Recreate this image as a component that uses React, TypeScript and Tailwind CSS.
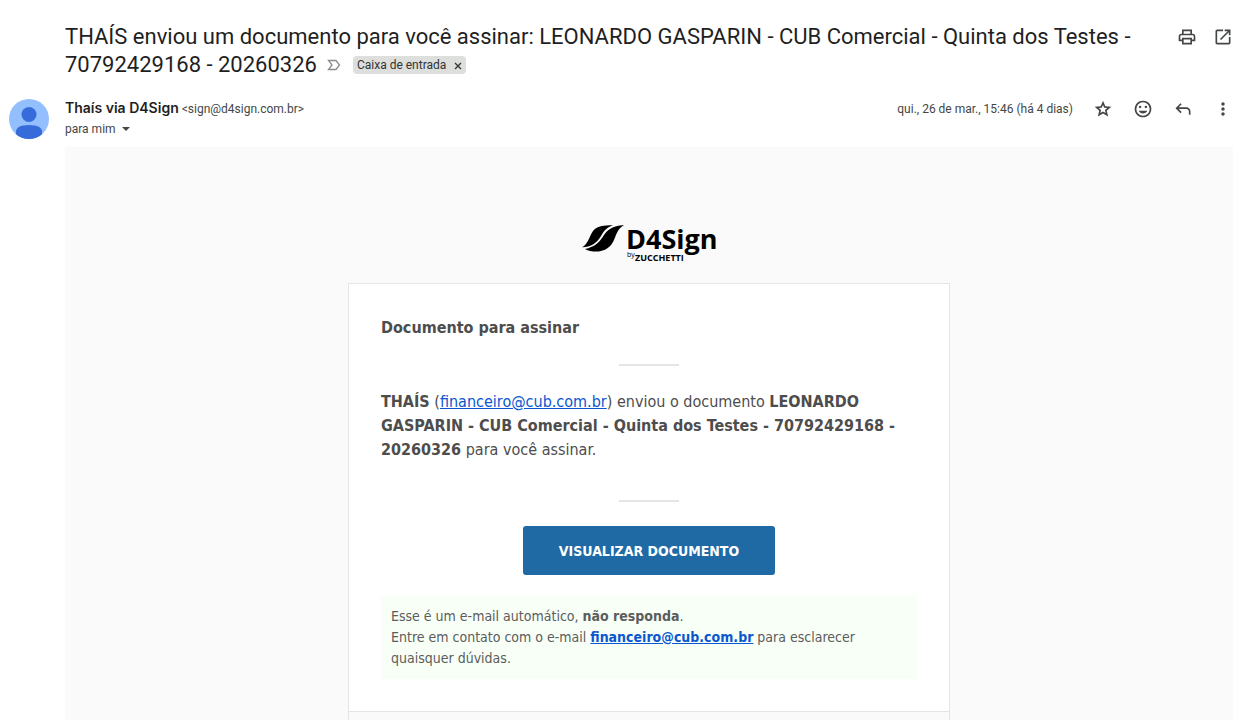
import React from 'react';

const bodyFont = "font-['DejaVu_Sans_Condensed','DejaVu_Sans',sans-serif]";

function Symbol({ d, className = 'size-5' }: { d: string; className?: string }) {
  return (
    <svg viewBox="0 -960 960 960" className={`${className} shrink-0`} fill="currentColor" aria-hidden="true">
      <path d={d} />
    </svg>
  );
}

const icons = {
  print: 'M640-640v-120H320v120h-80v-200h480v200h-80Zm80 360v160H240v-160H80v-240q0-51 35-85.5t85-34.5h560q51 0 85.5 34.5T880-520v240H720Zm-80-80H320v160h320v-160Zm80 0h80v-160q0-17-11.5-28.5T760-560H200q-17 0-28.5 11.5T160-520v160h80v-80h480v80Z',
  open: 'M200-120q-33 0-56.5-23.5T120-200v-560q0-33 23.5-56.5T200-840h280v80H200v560h560v-280h80v280q0 33-23.5 56.5T760-120H200Zm188-212-56-56 372-372H560v-80h280v280h-80v-144L388-332Z',
  star: 'm354-287 126-76 126 77-33-144 111-96-146-13-58-136-58 135-146 13 111 97-33 143ZM233-120l65-281L80-590l288-25 112-265 112 265 288 25-218 189 65 281-247-149-247 149Z',
  mood: 'M480-480Zm0 400q-83 0-156-31.5T197-197q-54-54-85.5-127T80-480q0-83 31.5-156T197-763q54-54 127-85.5T480-880q83 0 156 31.5T763-763q54 54 85.5 127T880-480q0 83-31.5 156T763-197q-54 54-127 85.5T480-80Zm0-80q134 0 227-93t93-227q0-134-93-227t-227-93q-134 0-227 93t-93 227q0 134 93 227t227 93Zm140-360q25 0 42.5-17.5T680-580q0-25-17.5-42.5T620-640q-25 0-42.5 17.5T560-580q0 25 17.5 42.5T620-520Zm-280 0q25 0 42.5-17.5T400-580q0-25-17.5-42.5T340-640q-25 0-42.5 17.5T280-580q0 25 17.5 42.5T340-520Zm140 260q68 0 123.5-38.5T684-400H276q25 63 80.5 101.5T480-260Z',
  reply: 'M760-200v-160q0-50-35-85t-85-35H273l144 144-57 56-240-240 240-240 57 56-144 144h367q83 0 141.5 58.5T840-360v160h-80Z',
  more: 'M480-160q-33 0-56.5-23.5T400-240q0-33 23.5-56.5T480-320q33 0 56.5 23.5T560-240q0 33-23.5 56.5T480-160Zm0-240q-33 0-56.5-23.5T400-480q0-33 23.5-56.5T480-560q33 0 56.5 23.5T560-480q0 33-23.5 56.5T480-400Zm0-240q-33 0-56.5-23.5T400-720q0-33 23.5-56.5T480-800q33 0 56.5 23.5T560-720q0 33-23.5 56.5T480-640Z',
};

function IconButton({ d, label }: { d: string; label: string }) {
  return (
    <button type="button" aria-label={label} className="text-[#444746]">
      <Symbol d={d} />
    </button>
  );
}

function Subject() {
  return (
    <div className="flex items-start pr-[7px] pl-[65px]">
      <h1 className="flex-1 font-[Roboto,sans-serif] text-[22px] leading-7 text-[#1f1f1f]">
        THAÍS enviou um documento para você assinar: LEONARDO GASPARIN - CUB Comercial - Quinta dos Testes - 70792429168 - 20260326
        <span className="ml-2.5 inline-flex h-7 items-center gap-3 align-bottom text-xs">
          <button type="button" aria-label="Importante">
            <svg viewBox="0 0 14 12" className="h-3 w-3.5" fill="none" stroke="#8a8d8c" aria-hidden="true">
              <path d="M1.500 1.500H9L12.500 6 9 10.500H1.500L5 6Z" strokeWidth="1.300" />
            </svg>
          </button>
          <span className="flex items-center gap-2 rounded bg-[#dddfdd] px-1 leading-[18px] text-[#333]">
            Caixa de entrada
            <button type="button" aria-label="Remover marcador">
              <svg viewBox="0 0 8 8" className="mt-px size-2" stroke="#333" strokeWidth="1.300" aria-hidden="true">
                <path d="m1 1 6 6M7 1 1 7" />
              </svg>
            </button>
          </span>
        </span>
      </h1>
      <div className="ml-6 flex gap-4 pt-1">
        <IconButton d={icons.print} label="Imprimir" />
        <IconButton d={icons.open} label="Abrir em nova janela" />
      </div>
    </div>
  );
}

function Sender() {
  return (
    <div className="flex pt-[19px] pr-[7px] pb-2 pl-[9px] font-[Roboto,sans-serif] text-xs text-[#444746]">
      <svg viewBox="0 0 40 40" className="mr-4 mt-px size-10 shrink-0" aria-hidden="true">
        <clipPath id="avatar"><circle cx="20" cy="20" r="20" /></clipPath>
        <g clipPath="url(#avatar)">
          <path d="M0 0h40v40H0z" fill="#94bfff" />
          <circle cx="20" cy="15.500" r="7.500" fill="#356cd9" />
          <path d="M7 40v-7q0-7 13-7t13 7v7Z" fill="#356cd9" />
        </g>
      </svg>
      <div className="flex-1">
        <p className="leading-5">
          <span className="font-[Inter,sans-serif] text-sm leading-5 font-semibold text-[#1f1f1f]">Thaís via D4Sign</span> &lt;sign@d4sign.com.br&gt;
        </p>
        <button type="button" className="flex items-center gap-1.5 leading-5">
          para mim
          <svg viewBox="0 0 8 4" className="h-1 w-2" fill="currentColor" aria-hidden="true"><path d="M0 0h8L4 4Z" /></svg>
        </button>
      </div>
      <div className="flex h-[22px] items-center gap-5">
        <time dateTime="2026-03-26T15:46">qui., 26 de mar., 15:46 (há 4 dias)</time>
        <IconButton d={icons.star} label="Marcar com estrela" />
        <IconButton d={icons.mood} label="Reagir" />
        <IconButton d={icons.reply} label="Responder" />
        <IconButton d={icons.more} label="Mais" />
      </div>
    </div>
  );
}

function Logo() {
  return (
    <svg viewBox="0 0 136 40" className="h-10 w-[136px] overflow-visible" role="img" aria-label="D4Sign by Zucchetti">
      <path d="M1 24.300C7 21 8 14 12 8C16 3 22 2.300 32 2.300C25 5 23 8 20 13C16 20 10 24 1 24.300Z" />
      <path d="M4 26C13 24 18 20 22 13.500C26 7 31 3 43 2C36 6 35 13 32 19C28 26 22 28.500 15 28.500C11 28.500 7 28 4 26Z" />
      <g fontFamily="Open Sans, sans-serif">
        <text x="45" y="26" fontSize="27" fontWeight="700">D4Sign</text>
        <text x="46" y="34" fontSize="7">by</text>
        <text x="54" y="38" fontSize="9" fontWeight="700">ZUCCHETTI</text>
      </g>
    </svg>
  );
}

function Divider() {
  return <hr className="mx-auto w-[60px] border-t-2 border-[#e5e5e5]" />;
}

export default function App() {
  return (
    <main className="flex min-h-screen flex-col bg-white pt-[23px]">
      <Subject />
      <Sender />
      <section className={`mr-[7px] ml-[65px] flex flex-1 flex-col bg-[#fafafa] pt-[76px] text-[#4d4d4d] ${bodyFont}`}>
        <div className="flex justify-center pb-5"><Logo /></div>
        <article className="mx-auto w-full max-w-[602px] border border-[#e5e5e5] bg-white p-8 text-base leading-6">
          <h2 className="mb-6 font-bold">Documento para assinar</h2>
          <Divider />
          <p className="my-6 pb-[14px]">
            <b>THAÍS</b> (<a href="mailto:financeiro@cub.com.br" className="text-[#0b57d0] underline">financeiro@cub.com.br</a>) enviou o documento <b>LEONARDO GASPARIN - CUB Comercial - Quinta dos Testes - 70792429168 - 20260326</b> para você assinar.
          </p>
          <Divider />
          <div className="mt-6 mb-[21px] flex justify-center">
            <button type="button" className="h-[49px] rounded-[3px] bg-[#1f69a5] px-9 text-sm font-bold text-white">VISUALIZAR DOCUMENTO</button>
          </div>
          <p className="bg-[#f7fff7] p-2.5 text-sm leading-[21px] text-[#5c5c5c]">
            Esse é um e-mail automático, <b>não responda</b>.<br />
            Entre em contato com o e-mail <a href="mailto:financeiro@cub.com.br" className="font-bold text-[#0b57d0] underline">financeiro@cub.com.br</a> para esclarecer quaisquer dúvidas.
          </p>
        </article>
        <div className="mx-auto min-h-2 w-full max-w-[602px] flex-1 border-x border-[#e5e5e5]"></div>
      </section>
    </main>
  );
}
